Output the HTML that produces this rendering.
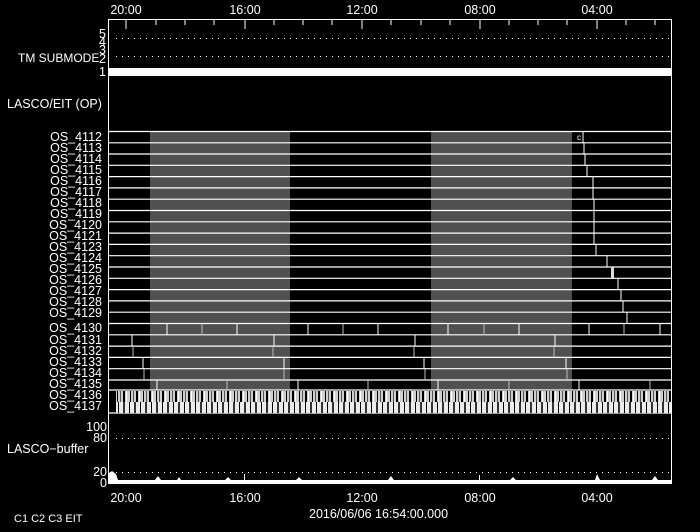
<!DOCTYPE html>
<html><head><style>
html,body{margin:0;padding:0;background:#000;width:700px;height:532px;overflow:hidden}
svg text{font-family:"Liberation Sans",sans-serif;fill:#fff;font-size:12.5px}
</style></head><body>
<svg width="700" height="532" xmlns="http://www.w3.org/2000/svg">
<defs>
<pattern id="p1" x="116" y="0" width="13" height="20" patternUnits="userSpaceOnUse">
<rect width="13" height="20" fill="#cfcfcf"/><rect x="1" width="1" height="20" fill="#000"/><rect x="4" width="1" height="20" fill="#555"/><rect x="7" width="2" height="20" fill="#000"/><rect x="10" width="1" height="20" fill="#fff"/></pattern>
<pattern id="p2" x="116" y="0" width="11" height="20" patternUnits="userSpaceOnUse">
<rect width="11" height="20" fill="#ececec"/><rect x="2" width="1" height="20" fill="#000"/><rect x="7" width="2" height="20" fill="#333"/></pattern>
<pattern id="dots" x="0" y="0" width="6" height="2" patternUnits="userSpaceOnUse"><rect x="2" width="1" height="1" fill="#fff"/></pattern>
</defs>
<g text-anchor="middle">
<text x="126" y="14">20:00</text><text x="245" y="14">16:00</text><text x="362" y="14">12:00</text><text x="480" y="14">08:00</text><text x="597" y="14">04:00</text>
<text x="126" y="502">20:00</text><text x="245" y="502">16:00</text><text x="362" y="502">12:00</text><text x="480" y="502">08:00</text><text x="597" y="502">04:00</text>
</g>
<text x="309" y="518">2016/06/06 16:54:00.000</text>
<text x="14" y="522" style="font-size:11px">C1  C2  C3  EIT</text>
<rect x="108.5" y="19.5" width="563" height="464" fill="none" stroke="#fff"/>
<g stroke="#fff">
<path d="M126 20v9M245 20v9M362 20v9M480 20v9M597 20v9"/>
<path d="M156 20v5M185 20v5M214 20v5M274 20v5M303 20v5M332 20v5M391 20v5M421 20v5M450 20v5M509 20v5M538 20v5M567 20v5M626 20v5M655 20v5"/>
</g>
<rect x="112" y="38" width="558" height="1" fill="url(#dots)"/>
<rect x="112" y="47" width="558" height="1" fill="url(#dots)"/>
<rect x="112" y="56" width="558" height="1" fill="url(#dots)"/>
<rect x="109" y="68" width="562" height="8" fill="#fff"/>
<g text-anchor="end" style="font-size:11px"><text x="106" y="38">5</text><text x="106" y="46">4</text><text x="106" y="54">3</text><text x="106" y="63">2</text><text x="106" y="76">1</text></g>
<text x="18" y="62" style="font-size:12px">TM SUBMODE</text>
<text x="7" y="108">LASCO/EIT (OP)</text>
<rect x="150" y="131" width="140" height="259" fill="#505050"/>
<rect x="431" y="131" width="141" height="259" fill="#505050"/>
<g stroke="#fff" stroke-width="1.2">
<path d="M109 131.5H671M109 142.8H671M109 154H671M109 165.3H671M109 176.6H671M109 187.9H671M109 199.2H671M109 210.5H671M109 221.8H671M109 233.1H671M109 244.4H671M109 255.7H671M109 267H671M109 278.3H671M109 289.6H671M109 300.9H671M109 312.2H671M109 323.5H671M109 334.8H671M109 346.1H671M109 357.4H671M109 368.7H671M109 380H671M109 390H671M109 413H671"/>
</g>
<g stroke="#fff">
<path d="M583 132v11M584 143v11M585 154v11M587 165v11M593 177v11M593 188v11M594 199v11M594 211v11M594 222v11M594 233v11M596 244v11M607 256v11M618 278v11M621 290v11M623 301v11M627 312v11"/>
</g>
<rect x="611" y="267" width="3" height="11" fill="#ddd"/>
<text x="577" y="140" style="font-size:8px">c</text>
<g stroke="#fff"><path d="M167 324v11M237 324v11M308 324v11M378 324v11M448 324v11M519 324v11M589 324v11M660 324v11M132 335v11M274 335v11M415 335v11M555 335v11M143 358v11M284 358v11M424 358v11M566 358v11M157 380v10M298 380v10M438 380v10M579 380v10"/></g>
<g stroke="#bbb"><path d="M202 324v11M343 324v11M484 324v11M624 324v11M133 346v11M273 346v11M414 346v11M554 346v11M144 369v11M284 369v11M425 369v11M567 369v11M227 380v10M368 380v10M509 380v10M650 380v10"/></g>
<rect x="116" y="391" width="555" height="11" fill="url(#p1)"/>
<rect x="116" y="402" width="555" height="11" fill="url(#p2)"/>
<g text-anchor="end" style="font-size:12px">
<text x="102" y="141">OS_4112</text><text x="102" y="152">OS_4113</text><text x="102" y="163">OS_4114</text><text x="102" y="174">OS_4115</text><text x="102" y="185">OS_4116</text><text x="102" y="196">OS_4117</text><text x="102" y="207">OS_4118</text><text x="102" y="218">OS_4119</text><text x="102" y="229">OS_4120</text><text x="102" y="240">OS_4121</text><text x="102" y="251">OS_4123</text><text x="102" y="262">OS_4124</text><text x="102" y="273">OS_4125</text><text x="102" y="284">OS_4126</text><text x="102" y="295">OS_4127</text><text x="102" y="306">OS_4128</text><text x="102" y="317">OS_4129</text><text x="102" y="332">OS_4130</text><text x="102" y="344">OS_4131</text><text x="102" y="355">OS_4132</text><text x="102" y="366">OS_4133</text><text x="102" y="377">OS_4134</text><text x="102" y="388">OS_4135</text><text x="102" y="399">OS_4136</text><text x="102" y="410">OS_4137</text>
</g>
<rect x="112" y="427" width="558" height="1" fill="url(#dots)"/>
<rect x="112" y="438" width="558" height="1" fill="url(#dots)"/>
<rect x="112" y="472" width="558" height="1" fill="url(#dots)"/>
<g text-anchor="end" style="font-size:12px"><text x="107" y="431">100</text><text x="107" y="442">80</text><text x="107" y="476">20</text><text x="107" y="487">0</text></g>
<text x="7" y="453">LASCO−buffer</text>
<rect x="109" y="480" width="562" height="4" fill="#fff"/>
<path d="M109 480V473L112 471L116 474L118 480ZM155 480l3-4l3 4ZM177 480l2-3l2 3ZM225 480l3-3l3 3ZM244 480V474h1V480ZM296 480l3-3l3 3ZM388 480l3-4l3 4ZM479 480V475h1V480ZM510 480l3-3l3 3ZM595 480l2-6l3 6ZM652 480l3-4l3 4Z" fill="#fff"/>
</svg>
</body></html>
